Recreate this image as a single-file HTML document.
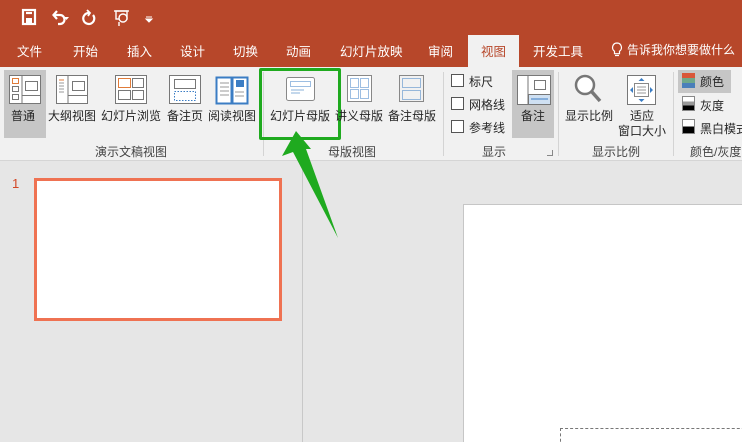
<!DOCTYPE html>
<html><head><meta charset="utf-8"><style>
*{margin:0;padding:0;box-sizing:border-box}
html,body{width:742px;height:442px;overflow:hidden}
body{position:relative;background:#e6e6e6;font-family:"Liberation Sans","Noto Sans CJK SC",sans-serif;font-size:12px;color:#262626}
.a{position:absolute}
.tab{position:absolute;top:41px;color:#fff;font-size:12.5px}
.lbl{position:absolute;top:107px;font-size:12px;white-space:nowrap}
.grp{position:absolute;top:143px;font-size:12px;color:#444;white-space:nowrap}
.sep{position:absolute;top:72px;width:1px;height:84px;background:#d4d4d4}
.cb{position:absolute;left:451px;width:13px;height:13px;border:1px solid #555;background:#fff}
.cbl{position:absolute;left:469px;font-size:12px}
</style></head><body>
<div class="a" style="left:0;top:0;width:742px;height:67px;background:#b7472a"></div>
<svg class="a" style="left:18px;top:5px" width="150" height="26" viewBox="0 0 150 26">
<g fill="none" stroke="#fff" stroke-width="2.2">
<rect x="5" y="5" width="12" height="14"/><rect x="8" y="13" width="6" height="6" fill="#fff" stroke="none"/><line x1="8" y1="8" x2="14" y2="8"/>
<path d="M36 10 h6 a4.5 4.5 0 0 1 0 9 h-2"/><path d="M39 6 l-3.5 4 l3.5 4"/>
<path d="M71 8 a5.5 5.5 0 1 0 4 2"/><path d="M69 5 l3 3 l-2 3" stroke-width="1.8"/>
<rect x="98" y="6" width="11" height="8" stroke-width="1.4"/><line x1="96" y1="6" x2="111" y2="6" stroke-width="1.4"/><circle cx="105" cy="13" r="4" stroke-width="1.4" fill="#b7472a"/><line x1="101" y1="17" x2="101" y2="21" stroke-width="1.4"/>
</g>
<path d="M46 12 l5 0 l-2.5 3z" fill="#fff"/><path d="M128 12 h6 M128 14 l3 3 l3 -3z" stroke="#fff" fill="#fff"/>
</svg>
<div class="tab" style="left:17px">文件</div>
<div class="tab" style="left:73px">开始</div>
<div class="tab" style="left:127px">插入</div>
<div class="tab" style="left:180px">设计</div>
<div class="tab" style="left:233px">切换</div>
<div class="tab" style="left:286px">动画</div>
<div class="tab" style="left:340px">幻灯片放映</div>
<div class="tab" style="left:428px">审阅</div>
<div class="a" style="left:468px;top:35px;width:51px;height:33px;background:#f1f1f1"></div>
<div class="tab" style="left:481px;color:#b7472a">视图</div>
<div class="tab" style="left:533px">开发工具</div>
<svg class="a" style="left:611px;top:42px" width="12" height="16"><path d="M6 1 a4.5 4.5 0 0 0 -2.5 8.2 v2.5 h5 v-2.5 A4.5 4.5 0 0 0 6 1z M4 13.5 h4" stroke="#fff" fill="none" stroke-width="1.2"/></svg>
<div class="tab" style="left:627px;font-size:12px">告诉我你想要做什么</div>
<div class="a" style="left:0;top:67px;width:742px;height:94px;background:#f1f1f1;border-bottom:1px solid #d5d5d5"></div>
<div class="a" style="left:4px;top:70px;width:42px;height:68px;background:#c6c6c6"></div>
<div class="a" style="left:512px;top:70px;width:42px;height:68px;background:#c6c6c6"></div>
<div class="a" style="left:678px;top:70px;width:53px;height:23px;background:#c6c6c6"></div>
<svg class="a" style="left:0;top:70px" width="260" height="36">
<g fill="#fff" stroke="#777" stroke-width="1">
<rect x="9.5" y="5.5" width="31" height="28"/><line x1="22" y1="6" x2="22" y2="33"/><line x1="22" y1="25.5" x2="40" y2="25.5"/>
<rect x="12.5" y="8.5" width="6" height="5" stroke="#e07b39"/><rect x="12.5" y="16.5" width="6" height="5"/><rect x="12.5" y="24.5" width="6" height="5"/><rect x="25.5" y="11.5" width="12" height="9"/>
<rect x="56.5" y="5.5" width="31" height="28"/><line x1="68" y1="6" x2="68" y2="33"/><line x1="68" y1="25.5" x2="87" y2="25.5"/><rect x="72.5" y="11.5" width="12" height="9"/>
<rect x="115.5" y="5.5" width="31" height="28"/><rect x="118.5" y="8.5" width="12" height="9" stroke="#e07b39"/><rect x="132.5" y="8.5" width="11" height="9"/><rect x="118.5" y="20.5" width="12" height="9"/><rect x="132.5" y="20.5" width="11" height="9"/>
<rect x="169.5" y="5.5" width="31" height="28"/><rect x="174.5" y="9.5" width="21" height="9"/><rect x="174.5" y="21.5" width="21" height="9" stroke="#3b7dc4" stroke-dasharray="1.5 1.5"/>
<path d="M216.5 7.5 h15 v26 h-15z M232.5 7.5 h15 v26 h-15z" stroke="#3b7dc4" stroke-width="2"/>
</g>
<g stroke="#999"><line x1="59" y1="10" x2="64" y2="10" stroke="#e07b39"/><line x1="59" y1="13" x2="64" y2="13"/><line x1="59" y1="16" x2="64" y2="16"/><line x1="59" y1="19" x2="64" y2="19"/><line x1="59" y1="22" x2="64" y2="22"/>
<line x1="220" y1="13" x2="229" y2="13"/><line x1="220" y1="17" x2="229" y2="17"/><line x1="220" y1="21" x2="229" y2="21"/><line x1="220" y1="25" x2="229" y2="25"/><line x1="235" y1="22" x2="244" y2="22"/><line x1="235" y1="26" x2="244" y2="26"/></g>
<rect x="236" y="10" width="8" height="7" fill="#3b7dc4"/>
</svg>
<div class="lbl" style="left:11px">普通</div>
<div class="lbl" style="left:48px">大纲视图</div>
<div class="lbl" style="left:101px">幻灯片浏览</div>
<div class="lbl" style="left:167px">备注页</div>
<div class="lbl" style="left:208px">阅读视图</div>
<div class="grp" style="left:95px">演示文稿视图</div>
<div class="sep" style="left:263px"></div>
<svg class="a" style="left:280px;top:70px" width="160" height="36">
<rect x="6.5" y="7.5" width="28" height="23" fill="#fff" stroke="#888" rx="2"/>
<rect x="10.5" y="11.5" width="20" height="5" fill="none" stroke="#3b7dc4" stroke-dasharray="1 1"/>
<line x1="11" y1="20" x2="24" y2="20" stroke="#8ab0da"/><line x1="11" y1="23" x2="20" y2="23" stroke="#8ab0da"/>
<rect x="67.5" y="5.5" width="24" height="26" fill="#fff" stroke="#888"/>
<g fill="none" stroke="#3b7dc4" stroke-dasharray="1 1"><rect x="70.5" y="8.5" width="8" height="9"/><rect x="80.5" y="8.5" width="8" height="9"/><rect x="70.5" y="19.5" width="8" height="9"/><rect x="80.5" y="19.5" width="8" height="9"/>
<rect x="122.5" y="8.5" width="18" height="9"/><rect x="122.5" y="20.5" width="18" height="9"/></g>
<rect x="119.5" y="5.5" width="24" height="26" fill="none" stroke="#888"/>
</svg>
<div class="a" style="left:259px;top:68px;width:82px;height:72px;border:3px solid #1faa1f;border-radius:2px"></div>
<div class="lbl" style="left:270px">幻灯片母版</div>
<div class="lbl" style="left:335px">讲义母版</div>
<div class="lbl" style="left:388px">备注母版</div>
<div class="grp" style="left:328px">母版视图</div>
<div class="sep" style="left:443px"></div>
<div class="cb" style="top:74px"></div><div class="cbl" style="top:73px">标尺</div>
<div class="cb" style="top:97px"></div><div class="cbl" style="top:96px">网格线</div>
<div class="cb" style="top:120px"></div><div class="cbl" style="top:119px">参考线</div>
<svg class="a" style="left:514px;top:72px" width="40" height="34">
<rect x="3.5" y="3.5" width="33" height="29" fill="#fff" stroke="#777"/><line x1="14" y1="4" x2="14" y2="32" stroke="#777"/>
<rect x="14.5" y="22.5" width="22" height="10" fill="#cfe0f2" stroke="#777"/><line x1="17" y1="27" x2="34" y2="27" stroke="#3b7dc4"/>
<rect x="20.5" y="8.5" width="11" height="9" fill="#fff" stroke="#777"/></svg>
<div class="lbl" style="left:521px">备注</div>
<div class="grp" style="left:482px">显示</div>
<div class="a" style="left:547px;top:150px;width:6px;height:6px;border-right:1px solid #888;border-bottom:1px solid #888"></div>
<div class="sep" style="left:558px"></div>
<svg class="a" style="left:570px;top:72px" width="95" height="36">
<circle cx="15" cy="13" r="9" fill="#fff" stroke="#777" stroke-width="2.5"/><line x1="22" y1="20" x2="30" y2="29" stroke="#777" stroke-width="3.5"/>
<rect x="57.5" y="3.5" width="28" height="29" fill="#fff" stroke="#777"/><rect x="64.5" y="11.5" width="14" height="13" fill="#fff" stroke="#888"/>
<g fill="#3b7dc4"><path d="M71.5 6 l3 3 h-6z M71.5 30 l3 -3 h-6z M60 18 l3 -3 v6z M83 18 l-3 -3 v6z"/></g>
<g stroke="#999"><line x1="67" y1="15" x2="76" y2="15"/><line x1="67" y1="18" x2="76" y2="18"/><line x1="67" y1="21" x2="76" y2="21"/></g></svg>
<div class="lbl" style="left:565px">显示比例</div>
<div class="lbl" style="left:630px">适应</div>
<div class="lbl" style="left:618px;top:122px">窗口大小</div>
<div class="grp" style="left:592px">显示比例</div>
<div class="sep" style="left:673px"></div>
<div class="a" style="left:682px;top:73px;width:13px;height:5px;background:#d9573a"></div>
<div class="a" style="left:682px;top:78px;width:13px;height:5px;background:#6fa88a"></div>
<div class="a" style="left:682px;top:83px;width:13px;height:5px;background:#4a7fba"></div>
<div class="a" style="left:700px;top:73px">颜色</div>
<div class="a" style="left:682px;top:96px;width:13px;height:15px;border:1px solid #888;background:linear-gradient(#fff 33%,#999 33%,#999 66%,#000 66%)"></div>
<div class="a" style="left:700px;top:97px">灰度</div>
<div class="a" style="left:682px;top:119px;width:13px;height:15px;border:1px solid #888;background:linear-gradient(#fff 50%,#000 50%)"></div>
<div class="a" style="left:700px;top:120px;white-space:nowrap">黑白模式</div>
<div class="grp" style="left:690px">颜色/灰度</div>
<div class="a" style="left:302px;top:162px;width:1px;height:280px;background:#c8c8c8"></div>
<div class="a" style="left:12px;top:176px;color:#d24726;font-size:13px">1</div>
<div class="a" style="left:34px;top:178px;width:248px;height:143px;border:3px solid #ef7252;background:#fff"></div>
<div class="a" style="left:463px;top:204px;width:290px;height:250px;border:1px solid #c6c6c6;background:#fff"></div>
<div class="a" style="left:560px;top:428px;width:200px;height:30px;border:1px dashed #777"></div>
<svg class="a" style="left:0;top:0" width="742" height="442"><path d="M296 131 L282 156 L293 152 L338 238 L306 149 L311 149 Z" fill="#1faa1f"/></svg>
</body></html>
